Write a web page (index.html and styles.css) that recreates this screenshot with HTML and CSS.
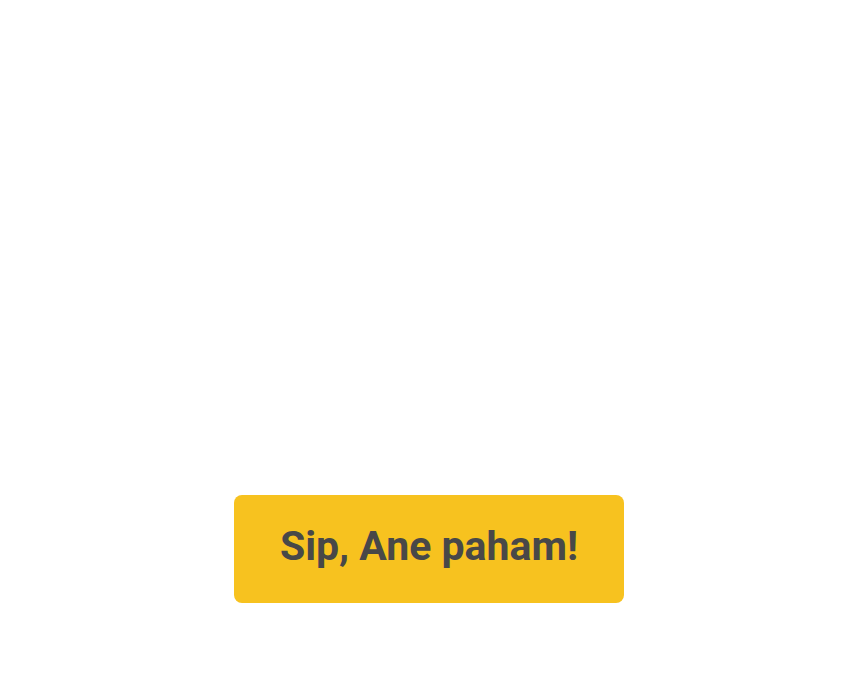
FILE: index.html
```html
<!DOCTYPE html>
<html>
<head>
<meta charset="utf-8">
<link rel="stylesheet" href="styles.css">
</head>
<body>
<main class="page">
  <button class="cta">Sip, Ane paham!</button>
</main>
</body>
</html>
```

FILE: styles.css
```css
html, body {
  margin: 0;
  padding: 0;
  background: #ffffff;
}
.page {
  width: 843px;
  height: 678px;
  display: flex;
  flex-direction: column;
  align-items: center;
  padding-top: 495px;
  padding-left: 15px;
  box-sizing: border-box;
}
.cta {
  width: 390px;
  height: 108px;
  border: none;
  border-radius: 8px;
  background: #f7c21f;
  color: #484848;
  font-family: Roboto, "Liberation Sans", sans-serif;
  font-weight: 700;
  font-size: 41px;
  display: flex;
  align-items: center;
  justify-content: center;
  padding: 0;
  padding-bottom: 6px;
}
```
